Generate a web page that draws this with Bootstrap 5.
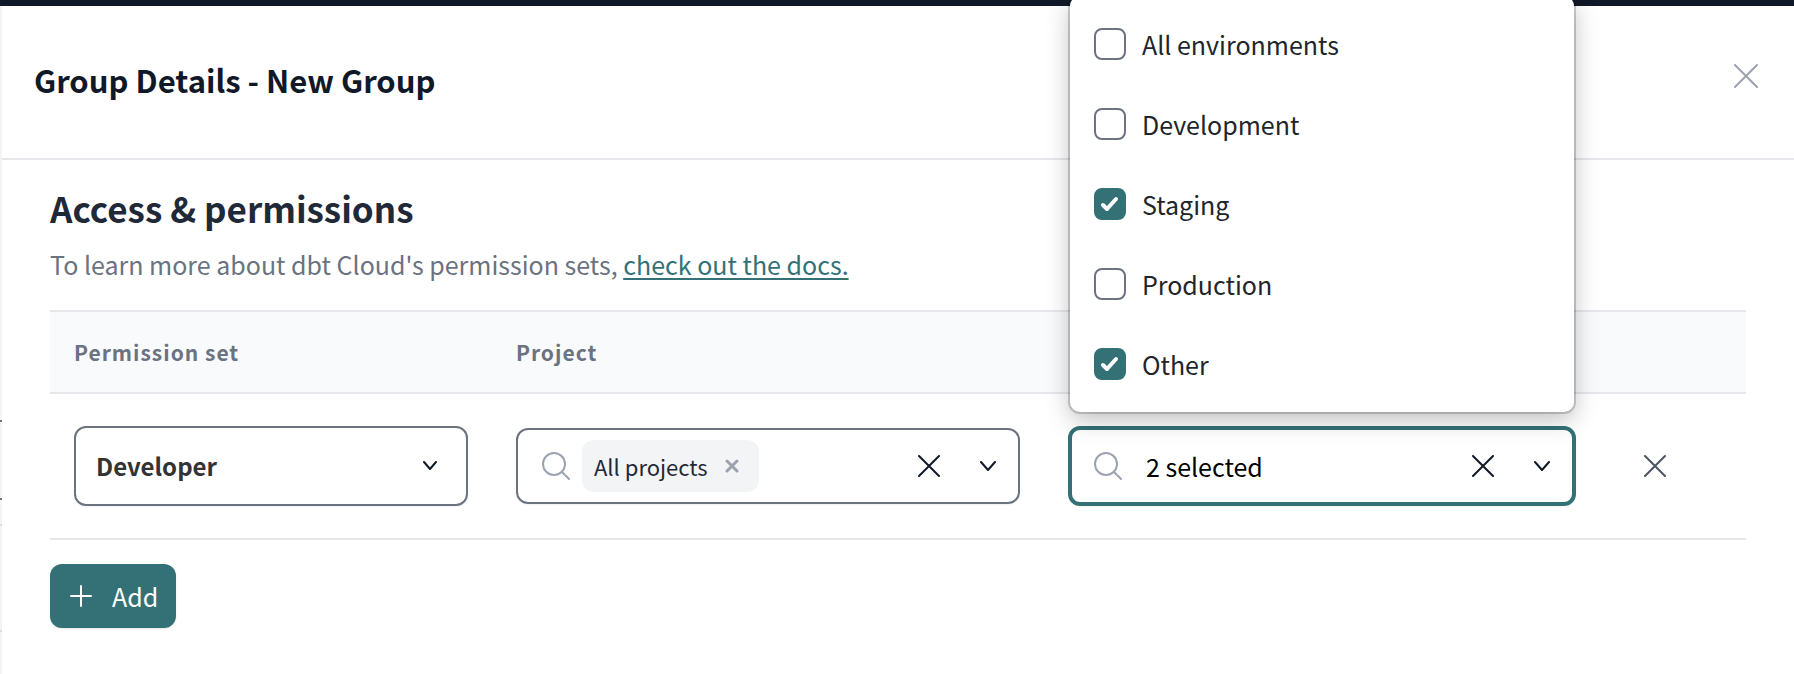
<!DOCTYPE html>
<html lang="en">
<head>
<meta charset="utf-8">
<meta name="viewport" content="width=device-width, initial-scale=1">
<title>Group Details - New Group</title>
<link href="https://cdn.jsdelivr.net/npm/bootstrap@5.3.0/dist/css/bootstrap.min.css" rel="stylesheet">
<style>
:root { --teal: #337177; --ink: #111827; --slate: #6b7280; --line: #e5e7eb; --mist: #9ca3af; }
body { font-family: "Noto Sans CJK SC", "Source Sans Pro", sans-serif; font-size: 25px; line-height: 36px; color: var(--ink); background: #fff; }
svg { fill: none; stroke: currentColor; stroke-width: 2; stroke-linecap: round; stroke-linejoin: round; flex: none; display: block; }
.topbar { height: 6px; background: var(--ink); }
.backdrop-edge { flex: none; width: 2px; background:
  linear-gradient(#6b7280, #6b7280) 0 414px / 2px 2px no-repeat,
  linear-gradient(#6b7280, #6b7280) 0 492px / 2px 2px no-repeat,
  linear-gradient(#dcdddf, #dcdddf) 0 518px / 2px 2px no-repeat,
  linear-gradient(#dcdddf, #dcdddf) 0 624px / 2px 2px no-repeat, #f4f4f5; }
.drawer { min-width: 0; }
.drawer-head { height: 154px; padding: 0 36px 4px 32px; border-bottom: 2px solid var(--line); }
.drawer-head h1 { font-size: 31px; line-height: 48px; font-weight: 600; }
.drawer-body { padding: 22px 48px 44px; }
.drawer-body h2 { font-size: 35px; line-height: 52px; font-weight: 600; color: #1f2937; }
.intro { color: var(--slate); margin: 12px 0 28px; }
.intro a { color: var(--teal); text-decoration-thickness: 2px; text-underline-offset: 3px; }
.icon-btn { background: none; border: 0; padding: 0; color: var(--ink); flex: none; }
.icon-muted { color: var(--mist); }
.remove-row { color: #4b5563; margin-left: 20px; }
.grants { table-layout: fixed; margin: 0; border-top: 2px solid var(--line); }
.grants > :not(caption) > * > * { padding: 0 24px; border-bottom: 2px solid var(--line); vertical-align: middle; box-shadow: none; }
.grants thead th { height: 82px; background: #f9fafb; color: var(--slate); font-size: 21px; line-height: 32px; font-weight: 600; letter-spacing: 1px; }
.grants tbody td { height: 146px; }
.col-set { width: 26.06%; } .col-project { width: 32.55%; } .col-env { width: 32.78%; }
.role { height: 80px; border: 2px solid var(--slate); border-radius: 12px; padding: 0 60px 0 20px; font-size: 24px; font-weight: 600; color: #333;
  background-image: url("data:image/svg+xml,%3csvg xmlns='http://www.w3.org/2000/svg' viewBox='0 0 16 10'%3e%3cpath d='M2 1l6 7 6-7' fill='none' stroke='%23111827' stroke-width='2' stroke-linecap='round' stroke-linejoin='round'/%3e%3c/svg%3e");
  background-size: 16px 10px; background-position: right 28px center; box-shadow: 0 1px 2px #0000000d; }
.combo { height: 76px; border: 2px solid var(--slate); border-radius: 12px; padding: 0 22px 0 24px; box-shadow: 0 1px 2px #0000000d; }
.combo input { border: 0; outline: 0; padding: 0; background: none; min-width: 0; width: 0; flex: 1; color: #000; }
.combo .lens { color: var(--mist); }
.combo-open { height: 80px; border: 4px solid var(--teal); padding: 0 22px 0 22px; }
.chip { height: 52px; border-radius: 12px; background: #f3f4f6; color: #1f2937; font-size: 22px; line-height: 32px; padding: 0 20px 0 12px; gap: 17px; margin-left: 12px; }
.chip svg { stroke-width: 3; }
.env-menu { position: absolute; left: 2px; right: 2px; bottom: calc(100% + 14px); background: #fff; border-radius: 10px; padding: 8px 24px; z-index: 5;
  box-shadow: 0 0 0 2px #0000002e, 0 8px 24px #00000040; }
.env-menu label { height: 80px; gap: 16px; cursor: pointer; }
.env-menu .form-check-input { width: 32px; height: 32px; margin: 0; border: 2px solid var(--slate); border-radius: 8px; }
.env-menu .form-check-input:checked { background-color: var(--teal); border-color: var(--teal);
  background-image: url("data:image/svg+xml,%3csvg xmlns='http://www.w3.org/2000/svg' viewBox='0 0 28 28'%3e%3cpath d='M7 15l4 4 9-10' fill='none' stroke='%23fff' stroke-width='4' stroke-linecap='round' stroke-linejoin='round'/%3e%3c/svg%3e"); }
.add-btn { --bs-btn-bg: var(--teal); --bs-btn-hover-bg: #2a5f64; --bs-btn-color: #fff; --bs-btn-hover-color: #fff; height: 64px; margin-top: 24px; padding: 0 18px 0 20px; border: 0; border-radius: 12px; font-size: 25px; line-height: 36px; gap: 20px; box-shadow: 0 1px 2px #0000001a; }
</style>
</head>
<body class="min-vh-100 d-flex flex-column">
<div class="topbar"></div>
<div class="d-flex flex-grow-1">
  <div class="backdrop-edge"></div>
  <main class="drawer flex-grow-1">
    <header class="drawer-head d-flex align-items-center justify-content-between">
      <h1 class="m-0">Group Details - New Group</h1>
      <button class="icon-btn icon-muted pb-2" type="button" aria-label="Close">
        <svg width="24" height="24" viewBox="0 0 24 24"><path d="M1 1l22 22M23 1L1 23"/></svg>
      </button>
    </header>
    <section class="drawer-body">
      <h2 class="m-0">Access &amp; permissions</h2>
      <p class="intro">To learn more about dbt Cloud's permission sets, <a href="#docs">check out the docs.</a></p>
      <table class="table grants">
        <colgroup><col class="col-set"><col class="col-project"><col class="col-env"><col></colgroup>
        <thead><tr><th scope="col">Permission set</th><th scope="col">Project</th><th scope="col" aria-label="Environment"></th><th aria-label="Actions"></th></tr></thead>
        <tbody><tr>
          <td><select class="form-select role" aria-label="Permission set"><option>Developer</option></select></td>
          <td>
            <div class="combo d-flex align-items-center">
              <svg class="lens" width="28" height="28" viewBox="0 0 28 28"><circle cx="12" cy="12" r="11"/><path d="M20 20l7 7"/></svg>
              <span class="chip d-flex align-items-center">All projects
                <button class="icon-btn icon-muted" type="button" aria-label="Remove All projects"><svg width="14" height="14" viewBox="0 0 14 14"><path d="M2 2l10 10M12 2L2 12"/></svg></button>
              </span>
              <input type="text" aria-label="Search projects">
              <button class="icon-btn" type="button" aria-label="Clear projects"><svg width="22" height="22" viewBox="0 0 22 22"><path d="M1 1l20 20M21 1L1 21"/></svg></button>
              <button class="icon-btn ms-4 ps-3" type="button" aria-label="Show projects"><svg width="16" height="10" viewBox="0 0 16 10"><path d="M1 1l7 8 7-8"/></svg></button>
            </div>
          </td>
          <td>
            <div class="position-relative">
              <div class="combo combo-open d-flex align-items-center">
                <svg class="lens" width="28" height="28" viewBox="0 0 28 28"><circle cx="12" cy="12" r="11"/><path d="M20 20l7 7"/></svg>
                <input class="ms-4" type="text" value="2 selected" aria-label="Environments">
                <button class="icon-btn" type="button" aria-label="Clear environments"><svg width="22" height="22" viewBox="0 0 22 22"><path d="M1 1l20 20M21 1L1 21"/></svg></button>
                <button class="icon-btn ms-4 ps-3" type="button" aria-label="Show environments"><svg width="16" height="10" viewBox="0 0 16 10"><path d="M1 1l7 8 7-8"/></svg></button>
              </div>
              <div class="env-menu">
                <label class="d-flex align-items-center"><input class="form-check-input" type="checkbox">All environments</label>
                <label class="d-flex align-items-center"><input class="form-check-input" type="checkbox">Development</label>
                <label class="d-flex align-items-center"><input class="form-check-input" type="checkbox" checked>Staging</label>
                <label class="d-flex align-items-center"><input class="form-check-input" type="checkbox">Production</label>
                <label class="d-flex align-items-center"><input class="form-check-input" type="checkbox" checked>Other</label>
              </div>
            </div>
          </td>
          <td><button class="icon-btn remove-row d-block" type="button" aria-label="Remove row"><svg width="22" height="22" viewBox="0 0 22 22"><path d="M1 1l20 20M21 1L1 21"/></svg></button></td>
        </tr></tbody>
      </table>
      <button class="btn add-btn d-flex align-items-center" type="button">
        <svg width="22" height="22" viewBox="0 0 22 22"><path d="M11 1v20M1 11h20"/></svg>Add
      </button>
    </section>
  </main>
</div>
<script src="https://cdn.jsdelivr.net/npm/bootstrap@5.3.0/dist/js/bootstrap.bundle.min.js"></script>
</body>
</html>
